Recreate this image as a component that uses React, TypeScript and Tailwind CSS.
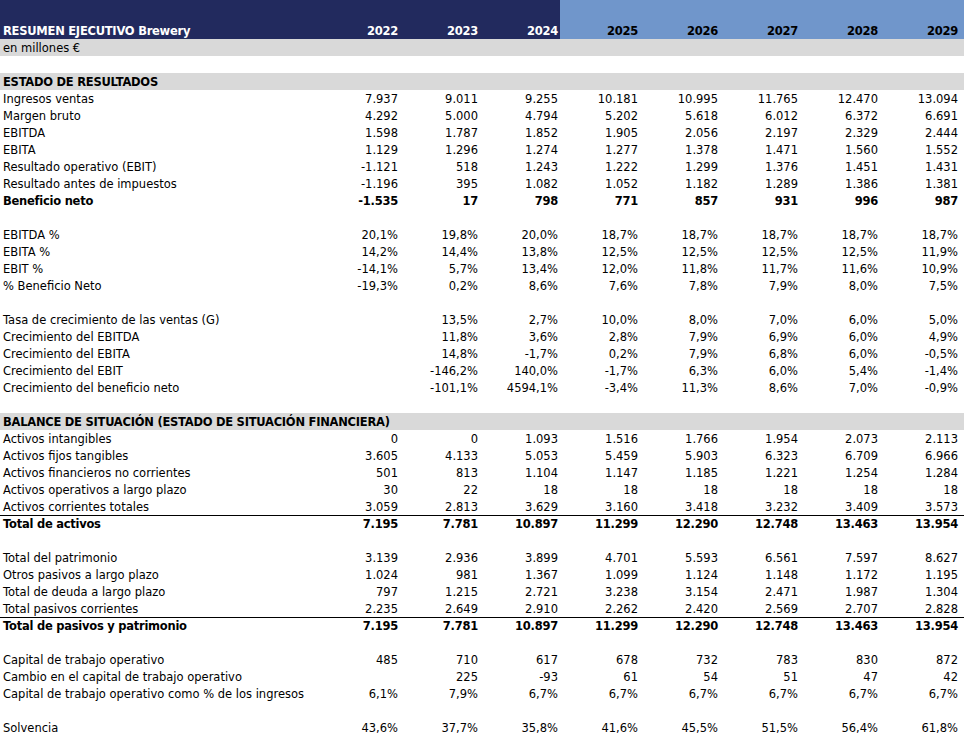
import React from "react";

type Row =
  | { kind: "blank" }
  | { kind: "section"; label: string }
  | { kind: "data"; label: string; values: string[]; bold?: boolean; topBorder?: boolean };

const rows: Row[] = [
  { kind: "section", label: "ESTADO DE RESULTADOS" },
  { kind: "data", label: "Ingresos ventas", values: ["7.937", "9.011", "9.255", "10.181", "10.995", "11.765", "12.470", "13.094"] },
  { kind: "data", label: "Margen bruto", values: ["4.292", "5.000", "4.794", "5.202", "5.618", "6.012", "6.372", "6.691"] },
  { kind: "data", label: "EBITDA", values: ["1.598", "1.787", "1.852", "1.905", "2.056", "2.197", "2.329", "2.444"] },
  { kind: "data", label: "EBITA", values: ["1.129", "1.296", "1.274", "1.277", "1.378", "1.471", "1.560", "1.552"] },
  { kind: "data", label: "Resultado operativo (EBIT)", values: ["-1.121", "518", "1.243", "1.222", "1.299", "1.376", "1.451", "1.431"] },
  { kind: "data", label: "Resultado antes de impuestos", values: ["-1.196", "395", "1.082", "1.052", "1.182", "1.289", "1.386", "1.381"] },
  { kind: "data", label: "Beneficio neto", bold: true, values: ["-1.535", "17", "798", "771", "857", "931", "996", "987"] },
  { kind: "blank" },
  { kind: "data", label: "EBITDA %", values: ["20,1%", "19,8%", "20,0%", "18,7%", "18,7%", "18,7%", "18,7%", "18,7%"] },
  { kind: "data", label: "EBITA %", values: ["14,2%", "14,4%", "13,8%", "12,5%", "12,5%", "12,5%", "12,5%", "11,9%"] },
  { kind: "data", label: "EBIT %", values: ["-14,1%", "5,7%", "13,4%", "12,0%", "11,8%", "11,7%", "11,6%", "10,9%"] },
  { kind: "data", label: "% Beneficio Neto", values: ["-19,3%", "0,2%", "8,6%", "7,6%", "7,8%", "7,9%", "8,0%", "7,5%"] },
  { kind: "blank" },
  { kind: "data", label: "Tasa de crecimiento de las ventas (G)", values: ["", "13,5%", "2,7%", "10,0%", "8,0%", "7,0%", "6,0%", "5,0%"] },
  { kind: "data", label: "Crecimiento del EBITDA", values: ["", "11,8%", "3,6%", "2,8%", "7,9%", "6,9%", "6,0%", "4,9%"] },
  { kind: "data", label: "Crecimiento del EBITA", values: ["", "14,8%", "-1,7%", "0,2%", "7,9%", "6,8%", "6,0%", "-0,5%"] },
  { kind: "data", label: "Crecimiento del EBIT", values: ["", "-146,2%", "140,0%", "-1,7%", "6,3%", "6,0%", "5,4%", "-1,4%"] },
  { kind: "data", label: "Crecimiento del beneficio neto", values: ["", "-101,1%", "4594,1%", "-3,4%", "11,3%", "8,6%", "7,0%", "-0,9%"] },
  { kind: "blank" },
  { kind: "section", label: "BALANCE DE SITUACIÓN (ESTADO DE SITUACIÓN FINANCIERA)" },
  { kind: "data", label: "Activos intangibles", values: ["0", "0", "1.093", "1.516", "1.766", "1.954", "2.073", "2.113"] },
  { kind: "data", label: "Activos fijos tangibles", values: ["3.605", "4.133", "5.053", "5.459", "5.903", "6.323", "6.709", "6.966"] },
  { kind: "data", label: "Activos financieros no corrientes", values: ["501", "813", "1.104", "1.147", "1.185", "1.221", "1.254", "1.284"] },
  { kind: "data", label: "Activos operativos a largo plazo", values: ["30", "22", "18", "18", "18", "18", "18", "18"] },
  { kind: "data", label: "Activos corrientes totales", values: ["3.059", "2.813", "3.629", "3.160", "3.418", "3.232", "3.409", "3.573"] },
  { kind: "data", label: "Total de activos", bold: true, topBorder: true, values: ["7.195", "7.781", "10.897", "11.299", "12.290", "12.748", "13.463", "13.954"] },
  { kind: "blank" },
  { kind: "data", label: "Total del patrimonio", values: ["3.139", "2.936", "3.899", "4.701", "5.593", "6.561", "7.597", "8.627"] },
  { kind: "data", label: "Otros pasivos a largo plazo", values: ["1.024", "981", "1.367", "1.099", "1.124", "1.148", "1.172", "1.195"] },
  { kind: "data", label: "Total de deuda a largo plazo", values: ["797", "1.215", "2.721", "3.238", "3.154", "2.471", "1.987", "1.304"] },
  { kind: "data", label: "Total pasivos corrientes", values: ["2.235", "2.649", "2.910", "2.262", "2.420", "2.569", "2.707", "2.828"] },
  { kind: "data", label: "Total de pasivos y patrimonio", bold: true, topBorder: true, values: ["7.195", "7.781", "10.897", "11.299", "12.290", "12.748", "13.463", "13.954"] },
  { kind: "blank" },
  { kind: "data", label: "Capital de trabajo operativo", values: ["485", "710", "617", "678", "732", "783", "830", "872"] },
  { kind: "data", label: "Cambio en el capital de trabajo operativo", values: ["", "225", "-93", "61", "54", "51", "47", "42"] },
  { kind: "data", label: "Capital de trabajo operativo como % de los ingresos", values: ["6,1%", "7,9%", "6,7%", "6,7%", "6,7%", "6,7%", "6,7%", "6,7%"] },
  { kind: "blank" },
  { kind: "data", label: "Solvencia", values: ["43,6%", "37,7%", "35,8%", "41,6%", "45,5%", "51,5%", "56,4%", "61,8%"] },
];

const years = ["2022", "2023", "2024", "2025", "2026", "2027", "2028", "2029"];

export default function App() {
  return (
    <div
      className="w-[964px] h-[737px] overflow-hidden bg-white text-black text-[11.5px] leading-[15px]"
      style={{ fontFamily: '"DejaVu Sans", Verdana, sans-serif' }}
    >
      {/* header */}
      <div className="flex h-[39px] font-bold tracking-[-0.25px]">
        <div className="flex h-full w-[560px] bg-[#222a5e] text-white items-end">
          <div className="w-[320px] pl-[3px]">RESUMEN EJECUTIVO Brewery</div>
          {years.slice(0, 3).map((y) => (
            <div key={y} className="w-[80px] text-right pr-[2px]">{y}</div>
          ))}
        </div>
        <div className="flex h-full flex-1 bg-[#7096cb] items-end">
          {years.slice(3).map((y) => (
            <div key={y} className="w-[80px] text-right pr-[2px]">{y}</div>
          ))}
        </div>
      </div>
      <div className="h-[17px] pt-[2px] bg-[#d9d9d9] pl-[3px]">en millones €</div>
      <div className="h-[17px]" />
      {rows.map((r, i) => {
        if (r.kind === "blank") return <div key={i} className="h-[17px]" />;
        if (r.kind === "section")
          return (
            <div key={i} className="h-[17px] pt-[2px] bg-[#d9d9d9] pl-[3px] font-bold tracking-[-0.25px]">
              {r.label}
            </div>
          );
        return (
          <div
            key={i}
            className={`flex h-[17px] ${r.bold ? "font-bold tracking-[-0.25px]" : ""} ${r.topBorder ? "border-t border-black pt-[1px]" : "pt-[2px]"}`}
          >
            <div className="w-[320px] pl-[3px] whitespace-nowrap">{r.label}</div>
            {r.values.map((v, j) => (
              <div key={j} className="w-[80px] text-right pr-[2px] whitespace-nowrap">
                {v}
              </div>
            ))}
          </div>
        );
      })}
    </div>
  );
}
